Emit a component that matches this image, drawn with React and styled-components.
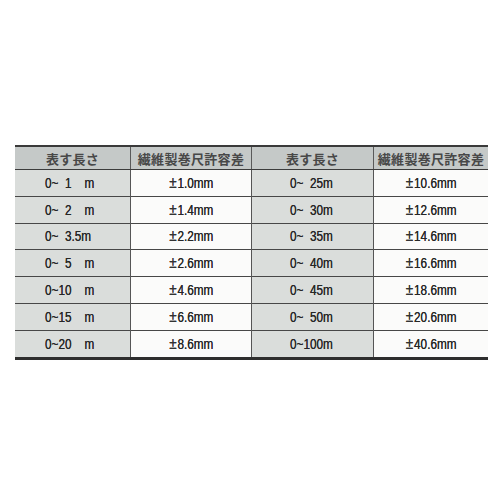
import styled, { createGlobalStyle } from 'styled-components';

const GlobalStyle = createGlobalStyle`
	html, body {
		margin: 0;
		background: #fff;
	}
`;

// figure spaces keep the numbers right-aligned like the printed table
const F = '\u2007';
const rows = [
	[`0~${F}1${F}${F}m`, '1.0mm', `0~${F}25m`, '10.6mm'],
	[`0~${F}2${F}${F}m`, '1.4mm', `0~${F}30m`, '12.6mm'],
	[`0~${F}3.5m`, '2.2mm', `0~${F}35m`, '14.6mm'],
	[`0~${F}5${F}${F}m`, '2.6mm', `0~${F}40m`, '16.6mm'],
	[`0~10${F}${F}m`, '4.6mm', `0~${F}45m`, '18.6mm'],
	[`0~15${F}${F}m`, '6.6mm', `0~${F}50m`, '20.6mm'],
	[`0~20${F}${F}m`, '8.6mm', '0~100m', '40.6mm'],
];

const Page = styled.div`
	width: 500px;
	height: 500px;
	padding: 145px 15px 0;
	box-sizing: border-box;
	background: #fff;
`;

const Table = styled.table`
	width: 470px;
	border-collapse: collapse;
	font-family: 'Liberation Sans', Arial, sans-serif;
	color: #262626;
	border-top: 2px solid #3a3a3a;
	border-bottom: 3px solid #2e2e2e;
	table-layout: fixed;
`;

const Head = styled.th`
	height: 22px;
	padding: 0;
	background: #c5c9c8;
	font-family: 'Noto Sans CJK JP', sans-serif;
	font-size: 13px;
	font-weight: 700;
	color: #484848;
	border-bottom: 1px solid #3c3c3c;
	border-left: ${(p) => (p.$first ? 'none' : '1px solid #5a5a5a')};
	width: ${(p) => p.$w}px;
	text-align: center;
	letter-spacing: 0.3px;
`;

const Row = styled.tr`
	border-bottom: 1px solid #474747;
	&:last-child {
		border-bottom: none;
	}
`;

const Cell = styled.td`
	height: 25.8px;
	padding: 0 0 0 ${(p) => p.$pad || 0}px;
	font-size: 14px;
	text-align: ${(p) => (p.$pad ? 'left' : 'center')};
	background: ${(p) => (p.$shade ? '#dadddb' : '#fbfbfa')};
	border-left: ${(p) => (p.$first ? 'none' : '1px solid #555')};
	white-space: pre;
`;

const Text = styled.span`
	display: inline-block;
	transform: scaleX(0.84);
	transform-origin: ${(p) => (p.$left ? 'left' : 'center')} center;
	text-shadow: 0 0 0.6px #333;
`;

const PlusMinus = styled.span`
	font-size: 16px;
	font-weight: 400;
	margin-right: 1px;
	color: #333;
`;

const App = () => {
	return (
		<Page>
			<GlobalStyle />
			<Table>
				<thead>
					<tr>
						<Head $first $w={115}>表す長さ</Head>
						<Head $w={120}>繊維製巻尺許容差</Head>
						<Head $w={121}>表す長さ</Head>
						<Head $w={114}>繊維製巻尺許容差</Head>
					</tr>
				</thead>
				<tbody>
					{rows.map((r) => (
						<Row key={r[0]}>
							<Cell $first $shade $pad={30}>
								<Text $left>{r[0]}</Text>
							</Cell>
							<Cell>
								<Text>
									<PlusMinus>±</PlusMinus>
									{r[1]}
								</Text>
							</Cell>
							<Cell $shade $pad={38}>
								<Text $left>{r[2]}</Text>
							</Cell>
							<Cell>
								<Text>
									<PlusMinus>±</PlusMinus>
									{r[3]}
								</Text>
							</Cell>
						</Row>
					))}
				</tbody>
			</Table>
		</Page>
	);
};

export default App;
